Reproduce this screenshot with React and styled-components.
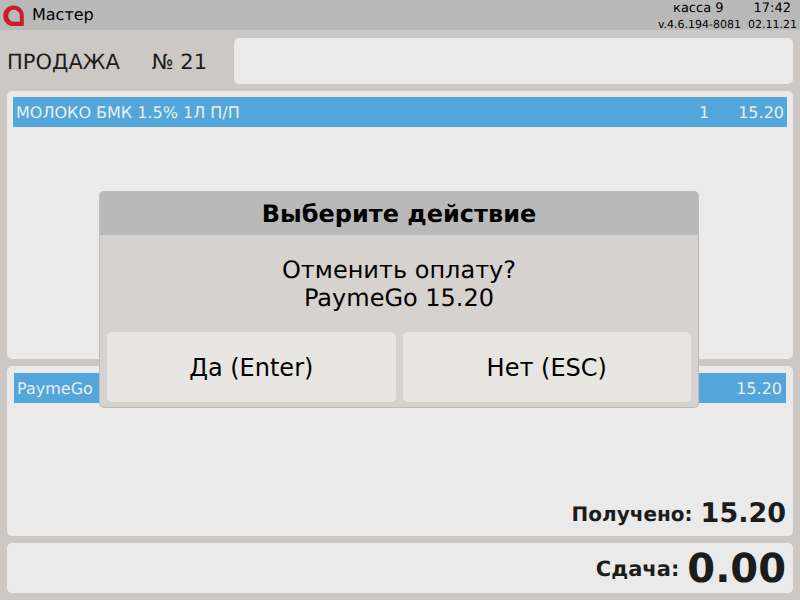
import React from "react";
import styled, { createGlobalStyle } from "styled-components";

const Global = createGlobalStyle`
  html, body { margin: 0; padding: 0; }
  body { font-family: "DejaVu Sans", sans-serif; text-rendering: geometricPrecision; }
`;
const Screen = styled.div`
  position: relative; width: 800px; height: 600px; overflow: hidden;
  background: #ccc8c5; color: #1c1c1c;
`;
const Header = styled.header`
  height: 30px; background: #b9b9b9; display: flex; align-items: center; justify-content: space-between;
  padding: 0 3px; color: #000;
`;
const Brand = styled.div`display: flex; align-items: center; gap: 8px; font-size: 16px; line-height: 30px;`;
const Info = styled.div`display: flex; flex-direction: column; align-items: flex-end; font-size: 11px; line-height: 15px; padding-top: 3px;`;
const InfoTop = styled.div`display: flex; font-size: 13px; line-height: 16px; padding-right: 6px; gap: 30px;`;
const Content = styled.main`
  display: flex; flex-direction: column; gap: 7px; padding: 8px 7px 0;
`;
const TitleRow = styled.div`display: flex; align-items: center; height: 46px;`;
const Title = styled.div`
  width: 227px; flex: none; font-size: 21px; display: flex; gap: 32px;
  position: relative; top: 1px;
`;
const Panel = styled.section`
  background: #eaeaea; border-radius: 5px; flex: ${p => p.$grow ? 1 : "none"};
  height: ${p => p.$h}px; box-sizing: border-box; padding: ${p => p.$pad};
  display: flex; flex-direction: column;
`;
const Row = styled.div`
  height: 30px; background: #53a6da; color: #e8eef2; display: flex; align-items: center; font-size: 16px;
  padding: ${p => p.$pad};
`;
const RowName = styled.span`flex: 1;`;
const Qty = styled.span`margin-right: 29px;`;
const Totals = styled.div`
  margin-top: auto; display: flex; justify-content: flex-end; align-items: center; gap: 8px;
  font-weight: 700;
`;
const Label = styled.span`font-size: ${p => p.$s}px;`;
const Overlay = styled.div`
  position: absolute; left: 99px; top: 191px; width: 600px; height: 217px; box-sizing: border-box;
  background: #d6d2cf; border-radius: 5px; border: 1px solid #bcbab8; border-top: 0; border-left-color: #c0bebc;
  display: flex; flex-direction: column; overflow: hidden; color: #000;
`;
const ModalTitle = styled.div`
  height: 44px; flex: none; background: #b9b9b9; display: flex; align-items: center; justify-content: center;
  font-size: 24px; font-weight: 700; margin: 0 -1px; padding-top: 2px; box-sizing: border-box;
`;
const Message = styled.div`
  height: 97px; flex: none; display: flex; flex-direction: column; align-items: center; justify-content: center;
  font-size: 24px; line-height: 28px; box-sizing: border-box;
`;
const Buttons = styled.div`display: flex; gap: 7px; padding: 0 7px;`;
const Button = styled.button`
  flex: 1; height: 70px; border: 0; background: #e7e6e3; border-radius: 5px; font: inherit; font-size: 24px;
  color: #000; padding: 2px 0 0;
`;
const Logo = () => (
  <svg width="21" height="21" viewBox="0 0 21 21">
    <path fillRule="evenodd" fill="#cb1c2c" d="M10.5 0.5C16.5 0.5 20.8 5 20.8 10.5V21.2H10.5C4.8 21.2 0.2 16.5 0.2 10.8C0.2 5 4.8 0.5 10.5 0.5ZM10.7 4.8C7.7 4.8 5.3 7.5 5.3 10.8C5.3 14 7.7 16.7 10.7 16.7H16.8V10.5C16.8 7.5 13.7 4.8 10.7 4.8Z" />
  </svg>
);

export default function App() {
  return (
    <Screen>
      <Global />
      <Header>
        <Brand><Logo />Мастер</Brand>
        <Info>
          <InfoTop><span>касса 9</span><span>17:42</span></InfoTop>
          <span>v.4.6.194-8081&nbsp;&nbsp;02.11.21</span>
        </Info>
      </Header>
      <Content>
        <TitleRow>
          <Title><span>ПРОДАЖА</span><span>№ 21</span></Title>
          <Panel $grow $h={46} />
        </TitleRow>
        <Panel $h={268} $pad="6px">
          <Row $pad="0 3px">
            <RowName>МОЛОКО БМК 1.5% 1Л П/П</RowName>
            <Qty>1</Qty>
            <span>15.20</span>
          </Row>
        </Panel>
        <Panel $h={170} $pad="7px">
          <Row $pad="0 4px 0 3px">
            <RowName>PaymeGo</RowName>
            <span>15.20</span>
          </Row>
          <Totals><Label $s={20}>Получено:</Label><Label $s={27}>15.20</Label></Totals>
        </Panel>
        <Panel $h={50} $pad="0 7px 1px">
          <Totals><Label $s={21}>Сдача:</Label><Label $s={40}>0.00</Label></Totals>
        </Panel>
      </Content>
      <Overlay>
        <ModalTitle>Выберите действие</ModalTitle>
        <Message><span>Отменить оплату?</span><span>PaymeGo 15.20</span></Message>
        <Buttons><Button>Да (Enter)</Button><Button>Нет (ESC)</Button></Buttons>
      </Overlay>
    </Screen>
  );
}
